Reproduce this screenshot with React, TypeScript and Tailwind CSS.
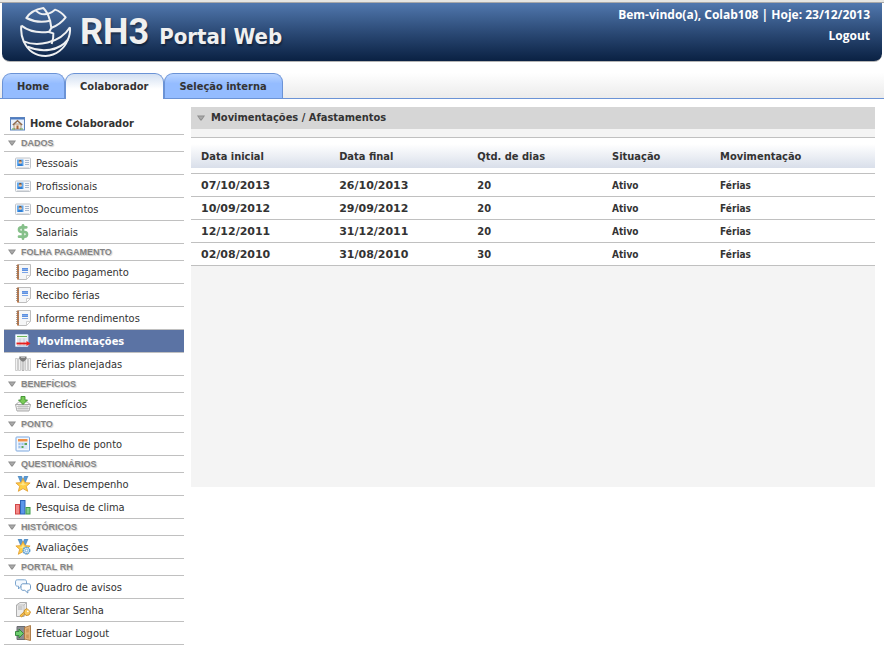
import type { ReactNode } from 'react';
import { DollarSign } from 'lucide-react';

interface MenuItem {
  label: string;
  icon: ReactNode;
  active?: boolean;
}

interface MenuSection {
  title: string;
  items: MenuItem[];
}

function Icon({ children }: { children: ReactNode }) {
  return (
    <svg viewBox="0 0 16 16" className="h-4 w-4 shrink-0" fill="none" aria-hidden="true">
      {children}
    </svg>
  );
}

function Arrow() {
  return (
    <svg viewBox="0 0 8 6" className="h-[6px] w-2 shrink-0" aria-hidden="true">
      <path d="M0 0.5h8L4.6 5.5H3.4z" fill="#8c8c8c" />
      <path d="M1.5 1.5h5L4 4.5z" fill="#a9a9a9" />
    </svg>
  );
}

function HomeIcon() {
  return (
    <Icon>
      <rect x="0.5" y="1.5" width="14" height="12.5" fill="#eaf2fc" stroke="#5b83bd" />
      <path d="M1 2h13v1.500H1z" fill="#4d7cc4" />
      <path d="M4 8h7v5H4z" fill="#f3e6d6" stroke="#9c8874" strokeWidth="0.8" />
      <path d="M2.8 9 7.500 4.800 12.200 9" stroke="#8f6a4c" strokeWidth="1.4" />
      <path d="M6.500 9.500h2V13h-2z" fill="#a8643a" />
      <path d="M2 13h3M10 13h3" stroke="#6aa84f" strokeWidth="1.2" />
    </Icon>
  );
}

function CardIcon() {
  return (
    <Icon>
      <rect x="0.5" y="3" width="15" height="10.5" rx="0.8" fill="#f6f7f9" stroke="#bfc4ca" />
      <rect x="2" y="4.5" width="6.500" height="6.500" fill="#62aaf0" />
      <path d="M3 11c0-2.200 1-2.800 2.300-2.800S7.600 8.800 7.600 11z" fill="#2f7fd6" />
      <circle cx="5.3" cy="7.200" r="1.500" fill="#f1c197" />
      <path d="M3.800 6.600c0-2 3-2 3 0z" fill="#7d5230" />
      <path d="M10 5.500h4M10 7.500h4M10 9.500h4" stroke="#9eb0c8" strokeWidth="0.900" />
      <path d="M2 12.500h12" stroke="#dcdfe3" />
    </Icon>
  );
}

function NotebookIcon() {
  return (
    <Icon>
      <path d="M3.500 0.500h12v11l-4 4h-8z" fill="#f5f6f7" stroke="#bdbdbd" />
      <path d="M11.500 15.500v-4h4z" fill="#fff" stroke="#c4c4c4" strokeWidth="0.8" />
      <path d="M2 0.500h2v15H2z" fill="#c07848" />
      <path d="M1 1.500h3M1 3.500h3M1 5.500h3M1 7.500h3M1 9.500h3M1 11.500h3M1 13.500h3" stroke="#8a7a6e" strokeWidth="0.7" />
      <path d="M7 4h6v3H7z" fill="#5b8fe0" />
      <path d="M7 5.500h6" stroke="#9bbcf0" strokeWidth="0.600" />
      <path d="M7 8.500h6" stroke="#7ba4e6" />
    </Icon>
  );
}

function MoveIcon() {
  return (
    <Icon>
      <rect x="0.500" y="1.500" width="12.500" height="12" rx="0.500" fill="#fff" stroke="#c3d5ee" />
      <path d="M2 3.500h10" stroke="#6cb35c" strokeWidth="1.200" />
      <path d="M2 6h10M2 8h10M2 12.500h10M5 5.500v8M9 5.500v8" stroke="#b9c3d2" strokeWidth="0.800" />
      <path d="M1.500 10.500h11" stroke="#e02020" strokeWidth="2" />
      <path d="M11.500 8 15.500 10.500l-4 2.500z" fill="#f02020" />
    </Icon>
  );
}

function PlanIcon() {
  return (
    <Icon>
      <path d="M0.500 2.500h2v12h-2zM3.500 2.500h2v12h-2zM10.500 2.500h2v12h-2zM13.500 2.500h2v12h-2z" fill="#f2f2f2" stroke="#c3c3c3" strokeWidth="0.800" />
      <path d="M7 4h2v10.500H7z" fill="#dedede" stroke="#a8a8a8" strokeWidth="0.800" />
      <path d="M4.300 0.500h7.200V3L9 5.500H7L4.300 3z" fill="#7b7b7b" />
      <path d="M6 1.500h4" stroke="#b9b9b9" />
    </Icon>
  );
}

function BasketIcon() {
  return (
    <Icon>
      <path d="M0.500 8.500h15l-1.500 6.500H2z" fill="#f5f5f5" stroke="#a0a0a0" strokeWidth="0.900" />
      <path d="M2 10.500h12M2.300 12.500h11.400M4 9v6M6 9v6M8 9v6M10 9v6M12 9v6" stroke="#b5b5b5" strokeWidth="0.700" />
      <path d="M1 8.500C3 6 4 6 5 6M15 8.500C13 6 12 6 11 6" stroke="#a5a5a5" />
      <path d="M6 0.500h4v3.500h2.500L8 8.500 3.500 4H6z" fill="#7acb58" stroke="#3c8f2c" strokeWidth="0.900" />
    </Icon>
  );
}

function CalendarIcon() {
  return (
    <Icon>
      <rect x="1" y="1" width="13.500" height="14" rx="0.800" fill="#f3f8fe" stroke="#7ba7df" />
      <path d="M3 3h9.500v2.500H3z" fill="#f09048" />
      <path d="M3 6h9.500v7H3z" fill="#dbe8f8" />
      <path d="M3.500 7h2v2h-2zM6.500 7h2v2h-2zM3.500 10h2v2h-2z" fill="#a0c2ec" />
      <path d="M9.500 7H12v2H9.500zM6.500 10h2v2h-2z" fill="#5aa65a" />
    </Icon>
  );
}

function StarIcon({ gear }: { gear?: boolean }) {
  return (
    <Icon>
      <path d="M3 0h3.500l2 5-3 1zM13 0H9.500l-2 5 3 1z" fill="#5c9bd4" stroke="#3b76ad" strokeWidth="0.500" />
      <path
        d="M8 2.500l1.900 4.100 5.200.4-3.800 3.300 1.400 5L8 12.600l-4.700 2.700 1.400-5L.9 7l5.200-.4z"
        fill="#ffcf45"
        stroke="#e3a238"
        strokeWidth="0.900"
        strokeLinejoin="round"
      />
      <path d="M8 5l1.100 2.700 2.700.3-3.800 1.500L4.200 8l2.700-.3z" fill="#ffe68c" />
      {gear && (
        <>
          <circle cx="11.500" cy="11.500" r="3.300" fill="#cfe5f7" stroke="#5c9fd3" strokeWidth="1.400" strokeDasharray="1.800 0.500" />
          <circle cx="11.500" cy="11.500" r="1.300" fill="#fff" stroke="#5f9dce" strokeWidth="0.700" />
        </>
      )}
    </Icon>
  );
}

function ChartIcon() {
  return (
    <Icon>
      <rect x="0.500" y="5.500" width="4" height="9.500" fill="#f58988" stroke="#d04848" />
      <rect x="5.500" y="1.500" width="4.500" height="13.500" fill="#5b96ea" stroke="#2e63b8" />
      <rect x="11" y="8.500" width="4" height="6.500" fill="#84d08a" stroke="#3f9a4a" />
    </Icon>
  );
}

function ChatIcon() {
  return (
    <Icon>
      <path d="M2.500 0.800h7c1.500 0 2 .7 2 2v2.400c0 1.300-.5 2-2 2H6L3.500 10V7.200h-1c-1.300 0-2-.7-2-2V2.800c0-1.300.7-2 2-2z" fill="#f4f9fe" stroke="#6d9cca" strokeWidth="0.900" />
      <path d="M8 4.800h5.500c1.300 0 2 .7 2 2v2.500c0 1.300-.7 2-2 2h-.7V14l-3-2.700H8c-1.300 0-2-.7-2-2V6.800c0-1.300.7-2 2-2z" fill="#fff" stroke="#5f8fbf" strokeWidth="0.900" />
    </Icon>
  );
}

function PasswordIcon() {
  return (
    <Icon>
      <path d="M1.500 3 5 0.500h6.500V11L9 14.500H1.500z" fill="#ececec" stroke="#a5a5a5" strokeWidth="0.900" />
      <path d="M1.500 3H9v11.500M9 3l2.500-2.500" stroke="#b5b5b5" strokeWidth="0.800" />
      <path d="M3 5h4.500M3 7h4.500" stroke="#9d9d9d" strokeWidth="0.800" />
      <path d="M10 10.500l-4.500 4" stroke="#c98a22" strokeWidth="2.600" />
      <path d="M10 10.500l-4.500 4" stroke="#f7c555" strokeWidth="1.200" />
      <path d="M9.500 8 12 6.500l3.500 3.500-1.500 3-3 .5-2-2.500z" fill="#f9cb5e" stroke="#c98a22" strokeWidth="0.900" />
      <circle cx="12.800" cy="9.300" r="0.900" fill="#fff" />
    </Icon>
  );
}

function DoorIcon() {
  return (
    <Icon>
      <path d="M2 1.500h8v13H2z" fill="#8b8d92" stroke="#6b6d72" />
      <path d="M9.500 2.500 15.500 0.500v15l-6-1.500z" fill="#e3b27a" stroke="#a67540" strokeWidth="0.900" />
      <path d="M11.200 4l2.600-.8v4l-2.600.3zM11.200 9.500h2.600v4l-2.600-.7z" fill="#cf975a" />
      <path d="M0.500 6.500H4V4l4.500 4.500L4 13v-2.500H0.500z" fill="#6fce6f" stroke="#2f8238" strokeWidth="0.900" />
    </Icon>
  );
}

const sections: MenuSection[] = [
  {
    title: 'DADOS',
    items: [
      { label: 'Pessoais', icon: <CardIcon /> },
      { label: 'Profissionais', icon: <CardIcon /> },
      { label: 'Documentos', icon: <CardIcon /> },
      { label: 'Salariais', icon: <DollarSign className="h-4 w-4 shrink-0 text-[#86c08a]" strokeWidth={4} /> },
    ],
  },
  {
    title: 'FOLHA PAGAMENTO',
    items: [
      { label: 'Recibo pagamento', icon: <NotebookIcon /> },
      { label: 'Recibo férias', icon: <NotebookIcon /> },
      { label: 'Informe rendimentos', icon: <NotebookIcon /> },
      { label: 'Movimentações', icon: <MoveIcon />, active: true },
      { label: 'Férias planejadas', icon: <PlanIcon /> },
    ],
  },
  { title: 'BENEFÍCIOS', items: [{ label: 'Benefícios', icon: <BasketIcon /> }] },
  { title: 'PONTO', items: [{ label: 'Espelho de ponto', icon: <CalendarIcon /> }] },
  {
    title: 'QUESTIONÁRIOS',
    items: [
      { label: 'Aval. Desempenho', icon: <StarIcon /> },
      { label: 'Pesquisa de clima', icon: <ChartIcon /> },
    ],
  },
  { title: 'HISTÓRICOS', items: [{ label: 'Avaliações', icon: <StarIcon gear /> }] },
  {
    title: 'PORTAL RH',
    items: [
      { label: 'Quadro de avisos', icon: <ChatIcon /> },
      { label: 'Alterar Senha', icon: <PasswordIcon /> },
      { label: 'Efetuar Logout', icon: <DoorIcon /> },
    ],
  },
];

const rows = [
  { start: '07/10/2013', end: '26/10/2013', days: 20, status: 'Ativo', type: 'Férias' },
  { start: '10/09/2012', end: '29/09/2012', days: 20, status: 'Ativo', type: 'Férias' },
  { start: '12/12/2011', end: '31/12/2011', days: 20, status: 'Ativo', type: 'Férias' },
  { start: '02/08/2010', end: '31/08/2010', days: 30, status: 'Ativo', type: 'Férias' },
];

const columns = [
  { label: 'Data inicial', width: 'w-[20.2%]' },
  { label: 'Data final', width: 'w-[20.2%]' },
  { label: 'Qtd. de dias', width: 'w-[19.7%]' },
  { label: 'Situação', width: 'w-[15.8%]' },
  { label: 'Movimentação', width: 'w-auto' },
];

const tabs = [
  { label: 'Home', active: false },
  { label: 'Colaborador', active: true },
  { label: 'Seleção interna', active: false },
];

function Logo() {
  return (
    <div className="flex items-center text-[#f0f0f0]">
      <svg viewBox="63 16 156 156" className="h-[52px] w-[52px]" fill="none" stroke="#eef0f2" strokeWidth="6" strokeLinejoin="round" aria-hidden="true">
        <path d="M82 52C92 35 110 26 133 22C143 32 149 44 153 60C130 66 102 62 82 52z" />
        <path d="M110 29C124 44 146 46 168 27C181 31 192 40 200 50C188 66 172 76 156 82" />
        <path d="M153 58L157 82L150 94L163 98C164 108 162 118 158 130" />
        <path d="M67 75C88 91 118 98 151 93" />
        <path d="M67 75C65 92 68 108 74 122C112 138 182 130 213 80" />
        <path d="M213 80C214 94 212 106 206 118C180 150 130 158 86 138" />
        <path d="M74 122C86 148 108 166 140 166C172 164 196 144 206 118" />
      </svg>
      <h1 className="ml-2 flex items-baseline gap-[10px] whitespace-nowrap pt-1 font-bold [text-shadow:1px_2px_2px_#0006]">
        <span className="font-['Roboto',sans-serif] text-[36px] leading-10">RH3</span>
        <span className="text-[22px] leading-10">Portal Web</span>
      </h1>
    </div>
  );
}

function Sidebar() {
  return (
    <nav className="w-[180px] shrink-0">
      <a href="#home" className="flex h-9 items-end gap-1 border-b border-[#c0c0c0] pb-[2px] pl-[6px] font-bold">
        <HomeIcon />
        <span className="leading-4">Home Colaborador</span>
      </a>
      {sections.map((section) => (
        <div key={section.title}>
          <h2 className="flex h-[17px] items-center gap-[5px] border-b border-[#c0c0c0] pl-1 font-['Liberation_Sans',sans-serif] text-[9px] font-bold text-[#858585] [text-shadow:1px_1px_1px_#ccc]">
            <Arrow />
            <span className="pt-[2px]">{section.title}</span>
          </h2>
          <ul>
            {section.items.map((item) => (
              <li key={item.label}>
                <a
                  href={`#${item.label}`}
                  className={
                    item.active
                      ? 'flex h-[23px] items-center gap-[6px] border-b border-[#c0c0c0] bg-[#5b73a4] pl-[11px] font-bold text-white'
                      : 'flex h-[23px] items-center gap-[5px] border-b border-[#c0c0c0] pl-[11px]'
                  }
                >
                  {item.icon}
                  <span className="pt-[2px] leading-4">{item.label}</span>
                </a>
              </li>
            ))}
          </ul>
        </div>
      ))}
    </nav>
  );
}

function Movements() {
  return (
    <section className="mt-2 min-h-[380px] min-w-0 flex-1 self-start bg-[#f4f4f4]">
      <h2 className="flex h-[22px] items-center gap-[6px] bg-[#d6d6d6] pl-[6px] font-bold">
        <Arrow />
        <span className="pt-px">Movimentações / Afastamentos</span>
      </h2>
      <table className="mt-2 w-full table-fixed border-collapse bg-white text-left font-bold">
        <thead>
          <tr className="border-y border-[#c0c0c0]">
            {columns.map((col) => (
              <th key={col.label} className={`p-0 pb-[5px] ${col.width}`}>
                <div className="h-[30px] bg-linear-to-b from-white from-20% to-[#d9dfea] pl-[10px] leading-[38px]">{col.label}</div>
              </th>
            ))}
          </tr>
        </thead>
        <tbody>
          {rows.map((row) => (
            <tr key={row.start} className="h-[23px] border-b border-[#c0c0c0] leading-4">
              <td className="p-0 pl-[10px] pt-[2px] font-['DejaVu_Sans',sans-serif]">{row.start}</td>
              <td className="p-0 pl-[10px] pt-[2px] font-['DejaVu_Sans',sans-serif]">{row.end}</td>
              <td className="p-0 pl-[10px] pt-[2px]">{row.days}</td>
              <td className="p-0 pl-[10px] pt-[2px] text-[10px]">{row.status}</td>
              <td className="p-0 pl-[10px] pt-[2px] text-[10px]">{row.type}</td>
            </tr>
          ))}
        </tbody>
      </table>
    </section>
  );
}

export default function App() {
  return (
    <div className="min-h-screen bg-white font-['DejaVu_Sans_Condensed','DejaVu_Sans',sans-serif] text-[11px] text-[#333]">
      <div className="h-[3px] border-b border-[#a8a8a8] bg-[#e6e6e2]" />
      <header className="mx-[2px] flex h-[59px] justify-between rounded-b-lg border-b border-[#b5b5b5] bg-linear-to-b from-[#5178ae] to-[#0a2143] pl-[18px] pr-3 text-white">
        <Logo />
        <div className="flex flex-col items-end pt-[2px] font-['Open_Sans',sans-serif] text-xs font-bold">
          <p className="leading-5">Bem-vindo(a), Colab108 | Hoje: 23/12/2013</p>
          <a href="#logout" className="leading-[22px]">Logout</a>
        </div>
      </header>
      <div className="flex h-[37px] items-end border-b border-[#6b93d6] bg-linear-to-b from-white from-30% to-[#ebebeb] pl-[2px]">
        {tabs.map((tab) => (
          <a
            key={tab.label}
            href={`#${tab.label}`}
            className={
              tab.active
                ? '-mb-px h-[26px] rounded-t-[9px] border border-b-0 border-[#6b93d6] bg-linear-to-b from-[#d3e0f2] to-white to-60% pl-[14px] pr-[15px] font-bold leading-[26px]'
                : 'h-[25px] rounded-t-[9px] border border-b-0 border-[#6b93d6] bg-linear-to-b from-[#b9d4ff] to-[#94bcff] to-40% pl-[14px] pr-[15px] font-bold leading-[26px]'
            }
          >
            {tab.label}
          </a>
        ))}
      </div>
      <main className="flex gap-[7px] pl-1 pr-[9px]">
        <Sidebar />
        <Movements />
      </main>
    </div>
  );
}
